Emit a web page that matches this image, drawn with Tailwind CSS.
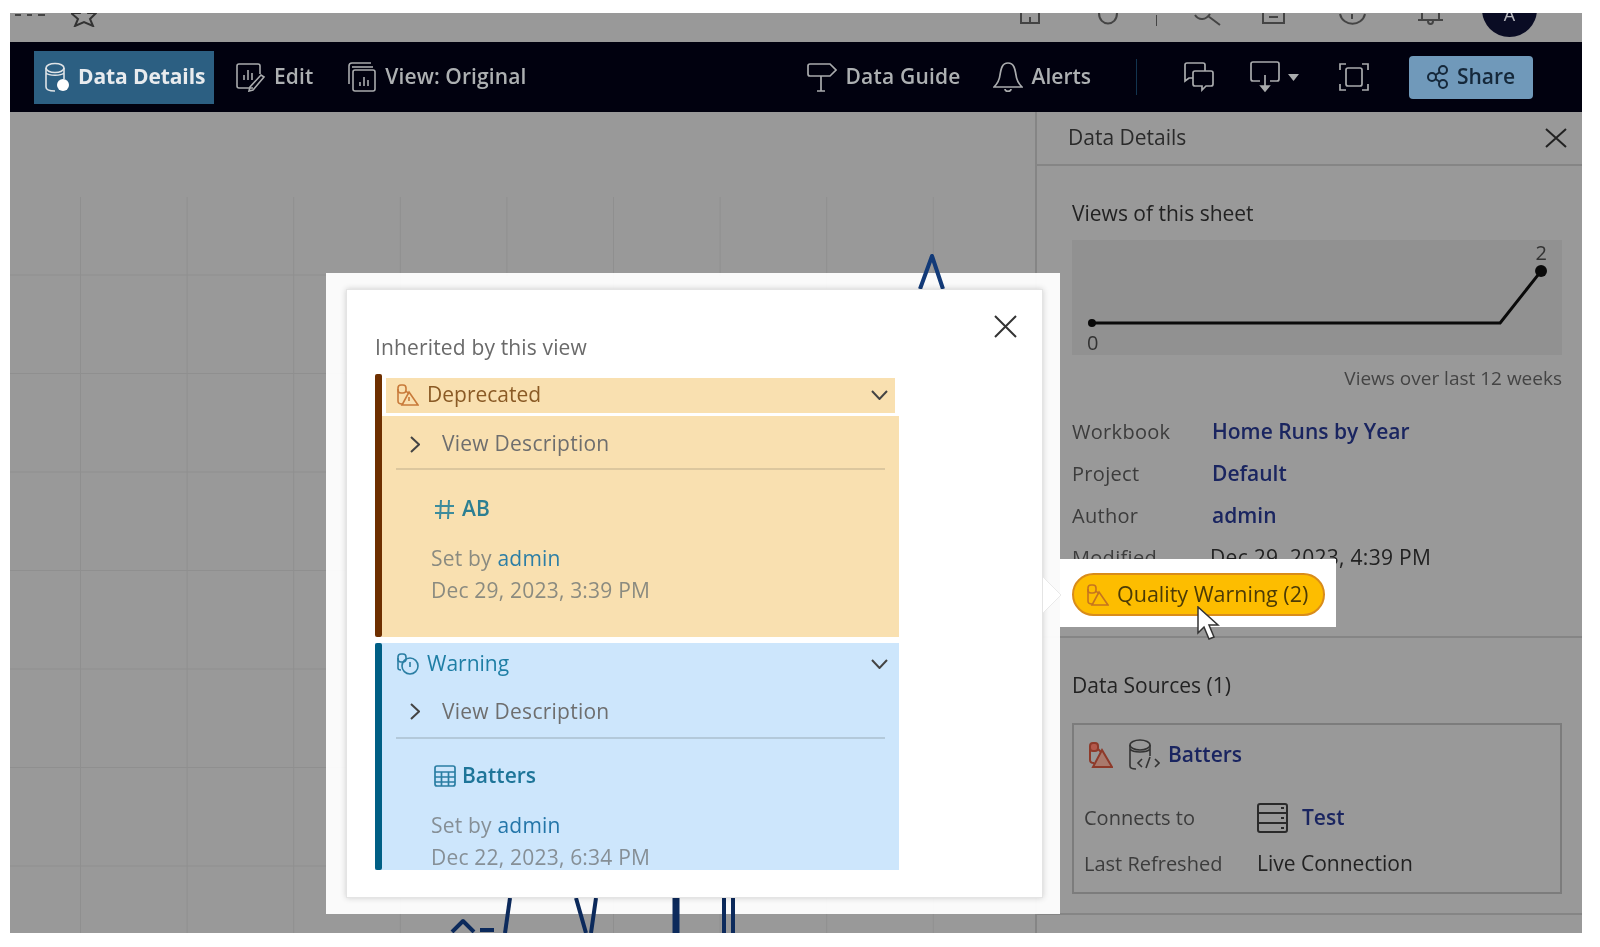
<!DOCTYPE html>
<html lang="en">
<head>
  <meta charset="UTF-8" />
  <title>Data Details</title>
  <script src="https://cdn.jsdelivr.net/npm/@tailwindcss/browser@4"></script>
</head>
<body class="bg-white font-['Open_Sans',sans-serif] overflow-hidden">
<div class="blur-[0.7px]">
<div class="relative ml-[10px] mt-[13px] w-[1572px] h-[920px] bg-[#999999] overflow-hidden flex flex-col">

  <!-- top bar, cut off by the crop -->
  <div class="h-[29px] shrink-0 flex items-start text-[#444]">
    <svg class="ml-[4px] w-[32px] h-[6px]" viewBox="0 0 32 6" fill="#444"><rect x="1" y="1" width="6" height="2"/><rect x="13" y="1" width="5" height="2"/><rect x="24" y="1" width="7" height="2"/></svg>
    <svg class="ml-[25px] w-[26px] h-[14px]" viewBox="0 0 26 14" fill="none" stroke="#333" stroke-width="2"><path d="M13 -10 L9 0 L0 0 L7 6 L4 13 L13 9 L22 13 L19 6 L25 0 L17 0 Z"/></svg>
    <svg class="ml-[923px] w-[20px] h-[12px]" viewBox="0 0 20 12" fill="none" stroke="#444" stroke-width="2"><path d="M1 0V10H19V0M10 4V10"/></svg>
    <svg class="ml-[58px] w-[20px] h-[12px]" viewBox="0 0 20 12" fill="none" stroke="#444" stroke-width="2"><path d="M1 0C1 14 19 14 19 0"/></svg>
    <div class="ml-[38px] mt-[2px] w-[1px] h-[11px] bg-[#444]"></div>
    <svg class="ml-[37px] w-[28px] h-[13px]" viewBox="0 0 28 13" fill="none" stroke="#444" stroke-width="2"><path d="M1 2C5 8 12 7 16 1M14 3L26 12"/></svg>
    <svg class="ml-[40px] w-[23px] h-[12px]" viewBox="0 0 23 12" fill="none" stroke="#444" stroke-width="2"><path d="M1 0V10H22V0M7 4H16"/></svg>
    <svg class="ml-[54px] w-[27px] h-[12px]" viewBox="0 0 27 12" fill="none" stroke="#444" stroke-width="2"><path d="M1 1C4 14 23 14 26 1M13 1V6"/></svg>
    <svg class="ml-[51px] w-[27px] h-[12px]" viewBox="0 0 27 12" fill="none" stroke="#444" stroke-width="2"><path d="M1 7H26M5 0V7M22 0V7M11 8C11 12 16 12 16 8"/></svg>
    <div class="ml-[38px] -mt-[31px] w-[55px] h-[55px] rounded-full bg-[#0a0c24] shrink-0 flex items-end justify-center pb-[13px] text-white/70 text-[18px] leading-[20px]">A</div>
  </div>

  <!-- toolbar -->
  <div class="h-[70px] shrink-0 bg-[#01010f] flex items-center justify-between pr-[49px] font-semibold text-[21px] text-[#adb0b2]">
    <div class="flex items-center">
      <div class="ml-[24px] w-[180px] h-[53px] bg-[#2c5f82] flex items-center pl-[9px] gap-[7px] text-[#e8ebee] font-bold">
        <svg class="w-[28px] h-[30px]" viewBox="0 0 28 30" fill="none" stroke="#dfe3e6" stroke-width="1.6"><ellipse cx="12" cy="6" rx="9" ry="4.5"/><path d="M3 6V25C3 28 7 29 12 29M21 6V17M3 11C6 14 18 14 21 11"/><circle cx="20" cy="23" r="6" fill="#fff" stroke="none"/></svg>
        <span class="tracking-[-0.1px]">Data Details</span>
      </div>
      <svg class="ml-[22px] w-[30px] h-[30px]" viewBox="0 0 30 30" fill="none" stroke="#a9abad" stroke-width="1.6"><path d="M17 26H3C2 26 1 25 1 24V4C1 3 2 2 3 2H22C23 2 24 3 24 4V12M8 18V13M12 18V8M16 18V11"/><path d="M28 15L17 28L13 29L14 25L25 13Z"/></svg>
      <span class="ml-[8px] tracking-[0.1px]">Edit</span>
      <svg class="ml-[34px] w-[30px] h-[30px]" viewBox="0 0 30 30" fill="none" stroke="#a9abad" stroke-width="1.6"><path d="M2 22V4C2 2 3 1 5 1H24"/><path d="M5 5H26"/><rect x="6" y="8" width="22" height="21" rx="2"/><path d="M13 24V20M17 24V15M21 24V18"/></svg>
      <span class="ml-[8px] tracking-[0.1px]">View: Original</span>
    </div>
    <div class="flex items-center">
      <svg class="w-[30px] h-[32px]" viewBox="0 0 30 32" fill="none" stroke="#a9abad" stroke-width="1.7"><path d="M3 3H23L29 9L23 15H3C1 15 1 14 1 13V5C1 4 1 3 3 3Z"/><path d="M14 15V30M10 30H18"/></svg>
      <span class="ml-[8px] tracking-[0.2px]">Data Guide</span>
      <svg class="ml-[32px] w-[30px] h-[32px]" viewBox="0 0 30 32" fill="none" stroke="#a9abad" stroke-width="1.7"><path d="M15 2C9 2 8 8 7 14C6.500 19 4 23 1 26H29C26 23 23.500 19 23 14C22 8 21 2 15 2Z"/><path d="M12 28C12 31 18 31 18 28"/></svg>
      <span class="ml-[9px]">Alerts</span>
      <div class="ml-[45px] w-[1px] h-[36px] bg-[#12344f]"></div>
      <svg class="ml-[47px] w-[30px] h-[30px]" viewBox="0 0 30 30" fill="none" stroke="#a9abad" stroke-width="1.7"><path d="M9 16H5L1 19V3C1 2 2 1 3 1H19C20 1 21 2 21 3V9"/><path d="M11 9H27C28 9 29 10 29 11V22C29 23 28 24 27 24H22L18 28V24H11C10 24 9 23 9 22V11C9 10 10 9 11 9Z"/></svg>
      <svg class="ml-[36px] w-[30px] h-[32px]" viewBox="0 0 30 32" fill="none" stroke="#a9abad" stroke-width="1.7"><path d="M10 20H3C2 20 1 19 1 18V3C1 2 2 1 3 1H27C28 1 29 2 29 3V18C29 19 28 20 27 20H20"/><path d="M15 14V28"/><path d="M11 25L15 30L19 25Z" fill="#a9abad"/></svg>
      <svg class="ml-[8px] w-[11px] h-[7px]" viewBox="0 0 11 7" fill="#a9abad"><path d="M0 0H11L5.500 7Z"/></svg>
      <svg class="ml-[40px] w-[30px] h-[30px]" viewBox="0 0 30 30" fill="none" stroke="#a9abad" stroke-width="1.7"><path d="M1 8V2H7M23 2H29V8M29 22V28H23M7 28H1V22"/><rect x="7" y="6" width="16" height="18" rx="2"/></svg>
      <div class="ml-[40px] w-[124px] h-[43px] bg-[#7099ba] rounded-[4px] flex items-center justify-center gap-[8px] text-[#15283a]">
        <svg class="w-[22px] h-[24px]" viewBox="0 0 22 24" fill="none" stroke="#15283a" stroke-width="2"><circle cx="5" cy="12" r="4"/><circle cx="16" cy="5" r="4"/><circle cx="16" cy="19" r="4"/><path d="M8.500 10L13 7M8.500 14L13 17"/></svg>
        <span>Share</span>
      </div>
    </div>
  </div>

  <div class="flex-1 flex min-h-0">
    <!-- sheet canvas: grid only, marks are in the overlay svg -->
    <div class="relative flex-1 pt-[85px]">
      <div class="h-full bg-[linear-gradient(#8f8f8f_1px,transparent_1px),linear-gradient(90deg,#8f8f8f_1px,transparent_1px)] bg-[length:106.600px_98.500px] bg-[position:70px_-21px]"></div>
    </div>

    <!-- side panel -->
    <aside class="w-[547px] shrink-0 border-l-[2px] border-[#858585] text-[21px] font-medium text-[#333]">
      <div class="h-[54px] border-b-[2px] border-[#858585] flex items-center justify-between pl-[31px] pr-[15px] text-[#2a2a2a]">
        <span>Data Details</span>
        <svg class="w-[22px] h-[20px]" viewBox="0 0 22 20" stroke="#222" stroke-width="2"><path d="M1 1L21 19M21 1L1 19"/></svg>
      </div>
      <div class="h-[472px] border-b-[2px] border-[#858585] pl-[35px] pr-[20px] pt-[35px]">
        <h2 class="leading-[24px] text-[#222]">Views of this sheet</h2>
        <div class="relative mt-[15px] h-[115px] bg-[#919191]">
          <svg class="absolute inset-0 w-full h-full" viewBox="0 0 491 115" fill="none"><path d="M20 83H429L470 31" stroke="#0a0a0a" stroke-width="3"/><circle cx="20" cy="83" r="4" fill="#0a0a0a"/><circle cx="470" cy="31" r="6" fill="#0a0a0a"/></svg>
          <span class="absolute left-[15px] top-[91px] text-[20px] leading-[24px]">0</span>
          <span class="absolute right-[15px] top-[1px] text-[20px] leading-[24px]">2</span>
        </div>
        <p class="mt-[11px] leading-[24px] text-right text-[19px] font-normal text-[#444]">Views over last 12 weeks</p>
        <dl class="mt-[21px] grid grid-cols-[140px_1fr] auto-rows-[42px] items-center">
          <dt class="text-[#3c3c3c] text-[20px] tracking-[0.3px]">Workbook</dt><dd class="font-semibold text-[#1a2560]">Home Runs by Year</dd>
          <dt class="text-[#3c3c3c] text-[20px] tracking-[0.3px]">Project</dt><dd class="font-semibold text-[#1a2560]">Default</dd>
          <dt class="text-[#3c3c3c] text-[20px] tracking-[0.3px]">Author</dt><dd class="font-semibold text-[#1a2560]">admin</dd>
          <dt class="text-[#3c3c3c] text-[20px] tracking-[0.3px]">Modified</dt><dd class="-ml-[2px] text-[#222] tracking-[0.3px]">Dec 29, 2023, 4:39 PM</dd>
        </dl>
      </div>
      <div class="h-[277px] border-b-[2px] border-[#858585] pl-[35px] pr-[20px] pt-[35px]">
        <h2 class="leading-[24px] text-[#222]">Data Sources (1)</h2>
        <div class="mt-[26px] h-[171px] border-[2px] border-[#7c7c7c] pl-[10px] pt-[12px]">
          <div class="flex items-center h-[36px]">
            <svg class="ml-[4px] w-[25px] h-[26px]" viewBox="0 0 25 26" fill="none" stroke="#8e3a2a" stroke-width="2"><rect x="2" y="1" width="8" height="8" rx="3" fill="#b3594c"/><path d="M2 5V18C2 20 4 21 6 21M10 7L14 11"/><path d="M14 8L24 25H5Z" fill="#a9796c"/></svg>
            <svg class="ml-[15px] w-[32px] h-[32px]" viewBox="0 0 32 32" fill="none" stroke="#333" stroke-width="1.6"><ellipse cx="12" cy="6" rx="10" ry="5"/><path d="M2 6V27C2 29 4 30 8 30M22 6V17M2 10C5 14 19 14 22 10M14 20L10 24L14 28M27 20L31 24L27 28M22 18L18 29"/></svg>
            <span class="ml-[8px] font-semibold text-[#1a2560]">Batters</span>
          </div>
          <div class="mt-[22px] grid grid-cols-[173px_1fr] auto-rows-[46px] items-center">
            <span class="text-[#3c3c3c] text-[20px]">Connects to</span>
            <div class="flex items-center">
              <svg class="w-[31px] h-[30px]" viewBox="0 0 31 30" fill="none" stroke="#2a2a2a" stroke-width="2"><rect x="1" y="1" width="29" height="28" rx="2"/><path d="M1 10H30M1 20H30M24 5H27M24 15H27M24 25H27"/></svg>
              <span class="ml-[14px] font-semibold text-[#1a2560]">Test</span>
            </div>
            <span class="text-[#3c3c3c] text-[20px]">Last Refreshed</span>
            <span class="text-[#222]">Live Connection</span>
          </div>
        </div>
      </div>
    </aside>
  </div>

  <!-- highlight frame around the popup -->
  <div class="absolute left-[316px] top-[260px] w-[734px] h-[641px] bg-white/95"></div>
  <div class="absolute left-[1050px] top-[546px] w-[276px] h-[68px] bg-white"></div>

  <!-- chart marks show over the frame -->
  <svg class="absolute inset-0 w-full h-full" viewBox="0 0 1572 920" fill="none" stroke="#123a78" stroke-linejoin="round">
    <path d="M910 276L922 243L933 276" stroke-width="4"/>
    <path d="M442 919L453 908L464 919" stroke="#0c2a5c" stroke-width="4"/>
    <path d="M470 917H484" stroke="#0c2a5c" stroke-width="4"/>
    <path d="M500 885L495 920" stroke="#0c2a5c" stroke-width="4"/>
    <path d="M566 885L576 920M586 885L581 920" stroke="#0c2a5c" stroke-width="4"/>
    <path d="M666 885V920" stroke="#0c2a5c" stroke-width="7"/>
    <path d="M714 885V920M723 885V920" stroke="#0c2a5c" stroke-width="4"/>
  </svg>

  <!-- quality warning popup -->
  <div class="absolute left-[336px] top-[276px] w-[697px] h-[609px] bg-white border border-[#e4e4e4] shadow-[0_0_6px_rgba(0,0,0,0.18)] pl-[28px] pt-[45px] text-[21px] font-medium">
    <svg class="absolute right-[25px] top-[25px] w-[23px] h-[23px]" viewBox="0 0 23 23" stroke="#333" stroke-width="2"><path d="M1 1L22 22M22 1L1 22"/></svg>
    <p class="leading-[24px] text-[#6a6a6a] tracking-[0.15px]">Inherited by this view</p>

    <div class="mt-[15px] w-[524px] h-[263px] flex">
      <div class="w-[7px] shrink-0 rounded-[2px] bg-[#6e2f00]"></div>
      <div class="flex-1 pt-[4px]">
        <div class="mx-[4px] h-[35px] pb-[2px] bg-[#f9e0b0] flex items-center pl-[11px] pr-[7px] text-[#8a5a25]">
          <svg class="w-[22px] h-[22px]" viewBox="0 0 22 22" fill="none" stroke="#c87a3a" stroke-width="1.6"><rect x="1" y="1" width="8" height="8" rx="3"/><path d="M1 5V17C1 19 3 20 5 20M9 7L12 10"/><path d="M12 8L21 21H5Z"/><path d="M12 13V17"/></svg>
          <span class="ml-[8px]">Deprecated</span>
          <svg class="ml-auto w-[17px] h-[10px]" viewBox="0 0 17 10" fill="none" stroke="#444" stroke-width="2"><path d="M1 1L8.500 9L16 1"/></svg>
        </div>
        <div class="mt-[3px] h-[221px] bg-[#f9e0b0]">
          <div class="mx-[14px] h-[54px] pt-[4px] border-b-[2px] border-[#dcc79e] flex items-center pl-[14px] text-[#6e6e6e]">
            <svg class="w-[10px] h-[17px]" viewBox="0 0 10 17" fill="none" stroke="#444" stroke-width="2"><path d="M1 1L9 8.500L1 16"/></svg>
            <span class="ml-[22px] tracking-[0.25px]">View Description</span>
          </div>
          <div class="ml-[49px] flex items-center mt-[27px] h-[24px] text-[#2c7f92] font-semibold">
            <svg class="ml-[3px] w-[21px] h-[21px]" viewBox="0 0 21 21" fill="none" stroke="#3d8c9c" stroke-width="2"><path d="M7 1L6 20M15 1L14 20M1 7H20M1 14H20"/></svg>
            <span class="ml-[7px]">AB</span>
          </div>
          <div class="ml-[49px] mt-[21px] leading-[32px] text-[#8b8b80] font-normal tracking-[0.2px]">
            <p>Set by <a class="text-[#2d7ea5] font-medium">admin</a></p>
            <p class="font-medium">Dec 29, 2023, 3:39 PM</p>
          </div>
        </div>
      </div>
    </div>

    <div class="mt-[6px] w-[524px] h-[227px] flex bg-[#cde6fc] overflow-hidden">
      <div class="w-[7px] shrink-0 rounded-[2px] bg-[#005f85]"></div>
      <div class="flex-1">
        <div class="h-[40px] pt-[2px] flex items-center pl-[15px] pr-[11px] text-[#1e7ea5]">
          <svg class="w-[22px] h-[22px]" viewBox="0 0 22 22" fill="none" stroke="#2a7ea3" stroke-width="1.6"><rect x="1" y="1" width="8" height="8" rx="3"/><path d="M1 5V15C1 16 2 17 4 17"/><circle cx="13" cy="13" r="8"/><path d="M13 9V14"/></svg>
          <span class="ml-[8px]">Warning</span>
          <svg class="ml-auto w-[17px] h-[10px]" viewBox="0 0 17 10" fill="none" stroke="#444" stroke-width="2"><path d="M1 1L8.500 9L16 1"/></svg>
        </div>
        <div class="mx-[14px] h-[56px] pt-[3px] border-b-[2px] border-[#b3c9da] flex items-center pl-[14px] text-[#6e6e6e]">
          <svg class="w-[10px] h-[17px]" viewBox="0 0 10 17" fill="none" stroke="#444" stroke-width="2"><path d="M1 1L9 8.500L1 16"/></svg>
          <span class="ml-[22px] tracking-[0.25px]">View Description</span>
        </div>
        <div class="ml-[49px] flex items-center mt-[25px] h-[24px] text-[#1e7599] font-semibold">
          <svg class="ml-[3px] w-[22px] h-[22px]" viewBox="0 0 22 22" fill="none" stroke="#2a7ea3" stroke-width="1.700"><rect x="1" y="1" width="20" height="20" rx="2"/><path d="M1 7H21M1 12H21M1 17H21M7.500 7V21M14.500 7V21"/></svg>
          <span class="ml-[6px]">Batters</span>
        </div>
        <div class="ml-[49px] mt-[21px] leading-[32px] text-[#868f96] font-normal tracking-[0.2px]">
          <p>Set by <a class="text-[#2375a8] font-medium">admin</a></p>
          <p class="font-medium">Dec 22, 2023, 6:34 PM</p>
        </div>
      </div>
    </div>
  </div>

  <!-- popup arrow -->
  <svg class="absolute left-[1032px] top-[562px] w-[21px] h-[40px]" viewBox="0 0 21 40" fill="#fff" stroke="#e9e9e9"><path d="M1 2L19 20L1 38"/></svg>

  <!-- pill with mouse pointer on top -->
  <div class="absolute left-[1062px] top-[560px] w-[253px] h-[43px] rounded-full bg-[#fdbd00] border-[2px] border-[#d98c1a] flex items-center pl-[13px] text-[21.500px] font-medium text-[#4c3b06]">
    <svg class="w-[22px] h-[22px]" viewBox="0 0 22 22" fill="none" stroke="#c5741f" stroke-width="1.6"><rect x="1" y="1" width="8" height="8" rx="3"/><path d="M1 5V17C1 19 3 20 5 20M9 7L12 10"/><path d="M12 8L21 21H5Z"/></svg>
    <span class="ml-[8px]">Quality Warning (2)</span>
  </div>
  <svg class="absolute left-[1186px] top-[593px] w-[24px] h-[35px]" viewBox="0 0 24 35" fill="#fff" stroke="#333" stroke-width="1.500"><path d="M2 1V27L8 21L13 33L18 31L13 19H22Z"/></svg>
</div>
</div>
</body>
</html>
